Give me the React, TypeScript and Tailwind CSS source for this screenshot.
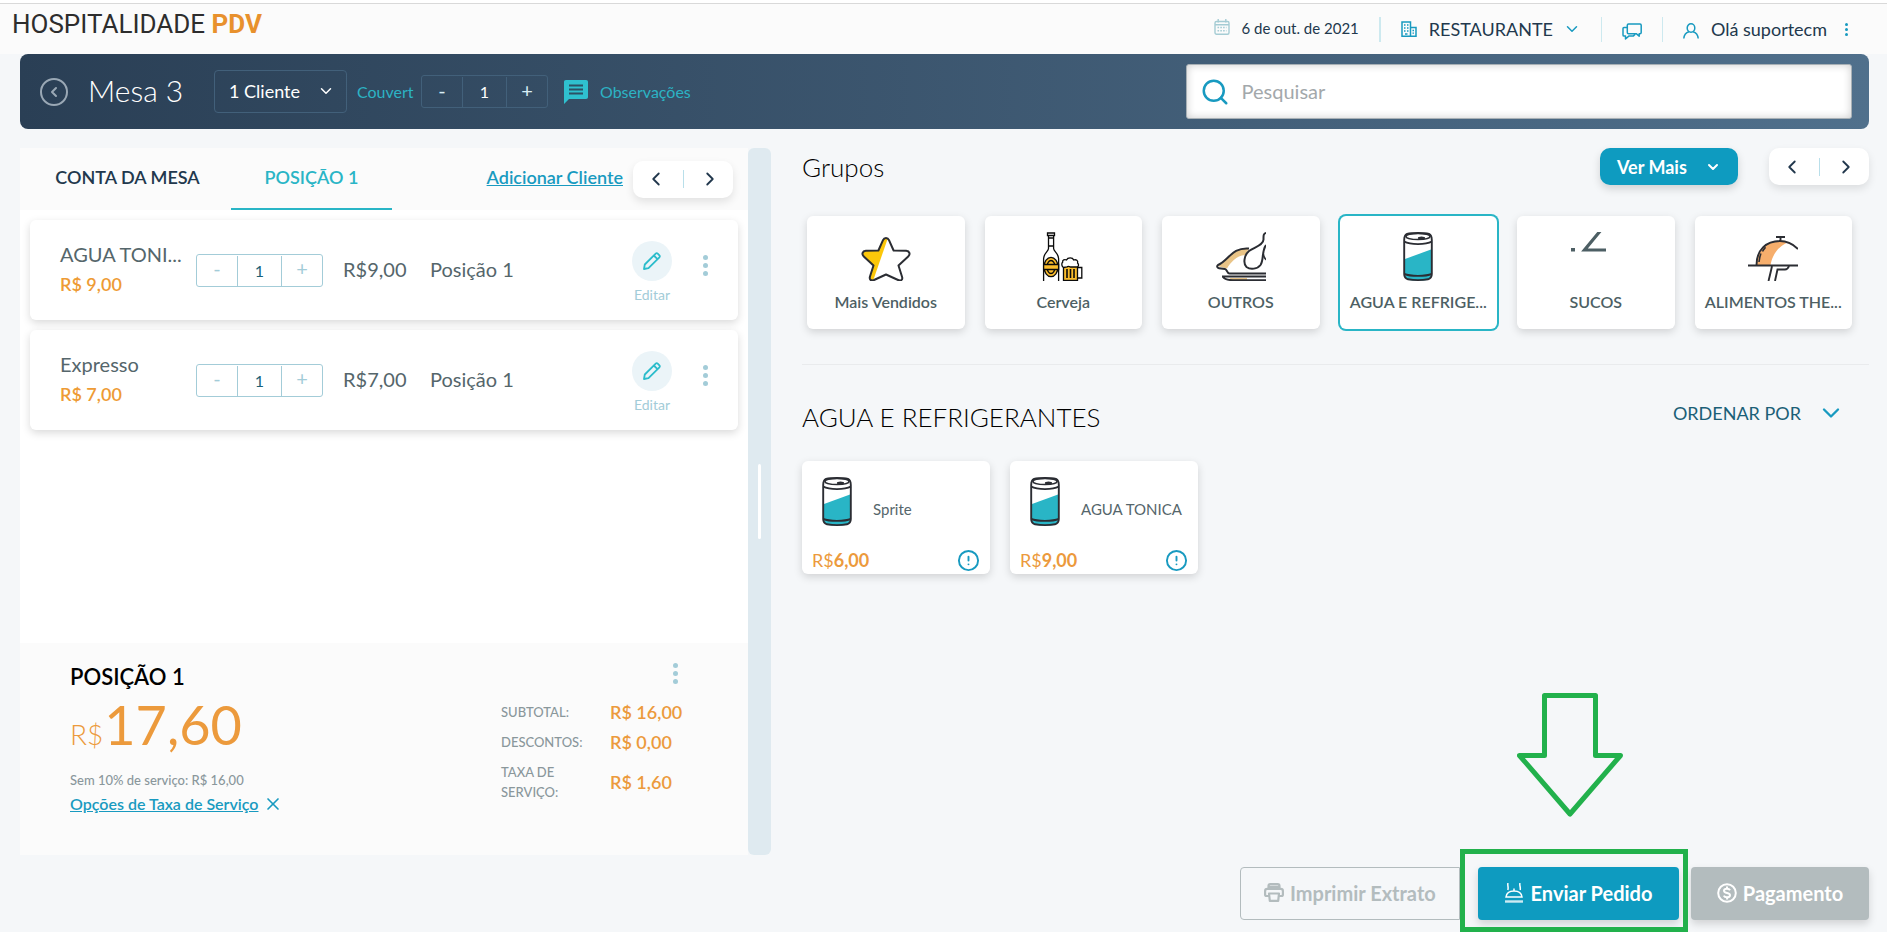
import { useState, type ReactNode } from 'react'
import clsx from 'clsx'
import { ChevronDown, ChevronLeft, ChevronRight, CircleAlert, Search, X } from 'lucide-react'

const items = [
  { id: 1, name: 'AGUA TONI...', unit: '9,00', position: 'Posição 1' },
  { id: 2, name: 'Expresso', unit: '7,00', position: 'Posição 1' },
]

const products = [
  { id: 1, name: 'Sprite', price: '6,00' },
  { id: 2, name: 'AGUA TONICA', price: '9,00' },
]

const totals = [
  { label: 'SUBTOTAL:', value: 'R$ 16,00' },
  { label: 'DESCONTOS:', value: 'R$ 0,00' },
  { label: 'TAXA DE SERVIÇO:', value: 'R$ 1,60' },
]

/* ---------- Icons ---------- */

function StarIcon() {
  const star =
    'M25 6c1.400 0 2.400.8 3 2.200l4.600 10.300 12.600.3c3.400.2 4.400 3.400 2 5.600L37.500 33.500l3.600 11.500c.8 2.800-1.200 4.200-4 3L25 42.500l-12 5.500c-3 1.200-4.800-.4-4.100-3.200L12.500 33.500 2.800 24.400c-2.400-2.200-1.400-5.400 2-5.600l12.600-.3L22 8.200c.6-1.400 1.600-2.200 3-2.200z'
  return (
    <svg viewBox="0 0 50 49" className="h-[49px] w-[50px]">
      <clipPath id="star-left">
        <path d="M0 0H29L12 49H0z" />
      </clipPath>
      <path d={star} fill="#fff" />
      <path d={star} fill="#fcc70a" clipPath="url(#star-left)" />
      <path d={star} fill="none" stroke="#2b2d33" strokeWidth="2" strokeLinejoin="round" />
    </svg>
  )
}

function BeerIcon() {
  return (
    <svg viewBox="0 0 50 49" className="h-[49px] w-[50px]" fill="none" stroke="#0b0b0b" strokeWidth="1.300">
      <path d="M9.500 1h7v2.500h-7zM10.500 3.500v13c0 3-4.900 5-4.900 10V49M15.600 3.500v13c0 3 5 5 5 10V49M10.500 6h5M10.500 14h5" />
      <ellipse cx="13" cy="35" rx="7" ry="9.600" fill="#fbbd2c" />
      <ellipse cx="13" cy="35" rx="4" ry="6.500" fill="#fbbd2c" />
      <path d="M5.600 32.500h15v5h-15z" fill="#fbbd2c" />
      <path d="M25.500 34h14V49h-14z" fill="#fbbd2c" />
      <path d="M29 37v9M32.500 37v9M36 37v9" strokeWidth="1.600" />
      <path d="M26 48.500h13.500" strokeWidth="1.400" />
      <path d="M40 35.500h3.800v10.500H40" />
      <path
        d="M25.500 35.500c-2-1.200-2.200-4-.8-5.500-.6-2 2-2.800 3.800-2 1.200-2.700 6.200-2.700 7.200 0 2.500-.8 4.600.7 3.900 3 1.600 1.500 1.100 4-1.100 4h-6c-1.200 0-2.200-1.500-3.500 0z"
        fill="#fff"
      />
    </svg>
  )
}

function ChickenIcon() {
  return (
    <svg viewBox="0 0 50 49" className="h-[49px] w-[50px]" strokeLinejoin="round">
      <path d="M1.500 34C9 32 13 16.500 33 16.500L29 23c-9 1-14 7-18 13.500z" fill="#e9c487" />
      <path d="M33 16.500C16 15 12 29 2 33c-1.500 1.300-.8 3 1 3.200l6 .8c2.500.5 1.500 4.500 4.500 4.500H50" fill="none" stroke="#2b2d33" strokeWidth="2" />
      <path
        d="M51 1c-4 0-3.500 3-3.500 6.500C47.500 13 39 15 33 19c-5 4-6 13-2.500 16 4 3 11 2 14-2 3.500-5 1-14 5.500-20"
        fill="#fff"
        stroke="#2b2d33"
        strokeWidth="2"
      />
      <path d="M47.500 22c0 3 1 4.500 3 6" fill="none" stroke="#2b2d33" strokeWidth="1.500" />
      <path d="M13 46h18v2H16z" fill="#e9c487" />
      <path d="M6 44.500h44M7 45c2 3 6 3.200 10 3.200h33" fill="none" stroke="#2b2d33" strokeWidth="1.900" />
    </svg>
  )
}

function CanIcon() {
  return (
    <svg viewBox="0 0 30 49" className="h-[49px] w-[30px]">
      <path d="M2 27L28 17.500V43c0 3-1 4.500-4 5-5 .8-13 .8-18 0-3-.5-4-2-4-5z" fill="#29b5c6" />
      <g fill="none" stroke="#2b2d33" strokeWidth="1.900">
        <path d="M1.200 8C1.200 6 2 2.800 4 2 9 .6 21 .6 26 2c2 .8 2.800 4 2.800 6v34c0 3-1 4.500-3.800 5.300-5 1-15 1-20 0-2.800-.8-3.800-2.300-3.800-5.300z" />
        <ellipse cx="15" cy="4.500" rx="12" ry="3" strokeWidth="1.500" />
        <path d="M1.200 9.500c6 3.500 21.600 3.500 27.600 0M1.200 42c6 2.500 21.600 2.500 27.600 0" />
      </g>
      <ellipse cx="18.500" cy="6" rx="3.600" ry="1.500" fill="#2b2d33" />
    </svg>
  )
}

function AngleIcon() {
  return (
    <svg viewBox="0 0 50 49" className="h-[49px] w-[50px]">
      <path d="M0 16h4v3.500H0z" fill="#4d5f64" />
      <path d="M30-2L13.500 18H35" fill="none" stroke="#4d5f64" strokeWidth="3.200" />
    </svg>
  )
}

function ClocheIcon() {
  return (
    <svg viewBox="0 0 50 49" className="h-[49px] w-[50px]">
      <path d="M8.500 33c0-13 9-24 24-24 2 0 4 .5 6 2-8 4-14 11-16 22z" fill="#f6ae6c" />
      <g fill="none" stroke="#2b2d33" strokeWidth="1.900">
        <path d="M8.500 33C8.500 18 18 9 32 9c7 0 13 3 18 8M28 5h9M32.500 5v4M0 33.500h50" />
        <path d="M11 30c.3-3 .8-6 2-8.500M14.500 19.500c1-2 2-3 3-4.200" strokeWidth="1.600" />
        <path d="M24 34c-1 5-2.500 11-3.500 15M41 34c-1 3-2.500 3.500-4 3.500h-7.500L27 49" />
      </g>
    </svg>
  )
}

function CalendarIcon() {
  return (
    <svg viewBox="0 0 16 16" className="h-4 w-4" fill="none" stroke="#a5ccd4" strokeWidth="1.400">
      <rect x="1" y="2.500" width="14" height="12.800" rx="1.500" />
      <path d="M1 5.800h14M4.200 0v3.500M11.800 0v3.500" />
      <path d="M3.500 8.500h9M3.500 11.800h9" strokeDasharray="1.600 1.200" />
    </svg>
  )
}

function BuildingIcon() {
  return (
    <svg viewBox="0 0 16 16" className="h-4 w-4" fill="none" stroke="#189ac0" strokeWidth="1.500">
      <path d="M1 15.200V1h8.500v14.200zM9.500 6.500H15v8.700H9.500" />
      <path d="M3 4h1.500M6 4h1.500M3 7h1.500M6 7h1.500M3 10h1.500M6 10h1.500M4 13h2.500M11.500 9.500H13M11.500 12.200H13" strokeWidth="1.300" />
    </svg>
  )
}

function ChatIcon() {
  return (
    <svg viewBox="0 0 20 17" className="h-[17px] w-5" fill="none" stroke="#189ac0" strokeWidth="1.500" strokeLinejoin="round">
      <path d="M6.500 1H18c.8 0 1.200.4 1.200 1.200v7.300c0 .8-.4 1.200-1.200 1.200h-.8v2.500l-3-2.500H6.500c-.8 0-1.200-.4-1.200-1.200V2.200C5.300 1.400 5.700 1 6.500 1z" />
      <path d="M5.300 4.500H2C1.300 4.500 1 4.900 1 5.600V12c0 .7.300 1.100 1 1.100h1.500V16l3.300-2.900h4.400l2-2" />
    </svg>
  )
}

function UserIcon() {
  return (
    <svg viewBox="0 0 16 16" className="h-4 w-4" fill="none" stroke="#189ac0" strokeWidth="1.500">
      <ellipse cx="8" cy="5" rx="3.800" ry="4.200" />
      <path d="M.8 15.500C1.200 11.500 3.500 9.500 6 8.800M15.200 15.500c-.4-4-2.700-6-5.200-6.700" />
    </svg>
  )
}

function NoteIcon() {
  return (
    <svg viewBox="0 0 24 24" className="h-6 w-6">
      <path d="M2 0h20c1.300 0 2 .8 2 2v15c0 1.300-.7 2-2 2H5l-5 5V2C0 .8.700 0 2 0z" fill="#2fc0cf" />
      <path d="M5 5.500h14M5 9.500h14M5 13.500h14" stroke="#2d5065" strokeWidth="2" />
    </svg>
  )
}

function PencilIcon() {
  return (
    <svg viewBox="0 0 18 18" className="h-[18px] w-[18px]" fill="none" stroke="#2bbccb" strokeWidth="1.800" strokeLinejoin="round">
      <path d="M1 17l.8-4.500L12.700 1.600c.6-.6 1.400-.6 2 0l1.700 1.700c.6.6.6 1.400 0 2L5.500 16.200zM10.800 3.500l3.700 3.700" />
    </svg>
  )
}

function PrinterIcon() {
  return (
    <svg viewBox="0 0 20 19" className="h-[19px] w-5" fill="none" stroke="#b3bcbe" strokeWidth="2.200" strokeLinejoin="round">
      <path d="M4.500 6V3c0-1.200.6-1.800 1.800-1.800h7.400c1.200 0 1.800.6 1.800 1.800v3M4.500 13H2.600c-.9 0-1.500-.6-1.500-1.500V8c0-1.400.8-2.200 2.200-2.200h13.400c1.400 0 2.200.8 2.200 2.200v3.500c0 .9-.6 1.500-1.500 1.500h-1.900M5 10.500h10l-.8 7.400H5.800zM4.500 3.800h11" />
    </svg>
  )
}

function OrderIcon() {
  return (
    <svg viewBox="0 0 18 20" className="h-5 w-[18px]" fill="none" stroke="#fff" strokeWidth="1.500">
      <path d="M1 14c.5-4 4-6 8-6s7.500 2 8 6zM9 8V5.500M3 0c-.8 2.300.8 4-.2 7M15 0c-.8 2.300.8 4 .2 7" />
      <path d="M0 18.500h18" strokeWidth="2.400" stroke="#cdeaf2" />
    </svg>
  )
}

function MoneyIcon() {
  return (
    <svg viewBox="0 0 20 20" className="h-5 w-5" fill="none" stroke="#fff" strokeWidth="2">
      <circle cx="10" cy="10" r="8.800" />
      <path d="M13 7.200c-.5-1-1.500-1.500-3-1.500-1.800 0-3 .8-3 2.100C7 11 13 9 13 12.200c0 1.300-1.200 2.100-3 2.100-1.600 0-2.700-.6-3.200-1.700M10 3.500v2.200M10 14.300v2.200" />
    </svg>
  )
}

function Dots({ label, small }: { label: string; small?: boolean }) {
  return (
    <button
      aria-label={label}
      className={clsx('flex flex-col items-center', small ? 'gap-[2px] text-[#189ac0]' : 'gap-[3px] text-[#a3ccd8]')}
    >
      {[0, 1, 2].map(i => (
        <span key={i} className={clsx('rounded-full bg-current', small ? 'size-[3px]' : 'size-[5px]')} />
      ))}
    </button>
  )
}

/* ---------- Pieces ---------- */

function Pager({ label }: { label: string }) {
  return (
    <div
      role="group"
      aria-label={label}
      className="flex h-[37px] w-[100px] items-center justify-between rounded-[10px] bg-white px-3 text-[#22384d] shadow-[0_4px_8px_rgba(0,0,0,0.1)]"
    >
      <button aria-label="Anterior"><ChevronLeft size={22} /></button>
      <span className="h-[18px] w-px bg-[#b9dfea]" />
      <button aria-label="Próximo"><ChevronRight size={22} /></button>
    </div>
  )
}

function Stepper({ dark, label }: { dark?: boolean; label: string }) {
  const [qty, setQty] = useState(1)
  return (
    <div
      role="group"
      aria-label={label}
      className={clsx(
        'flex h-[33px] w-[127px] shrink-0 items-stretch rounded-[3px] border text-xl leading-6',
        dark ? 'border-[#42607a] text-[#d9eef5]' : 'border-[#a3ccd8] text-[#a3ccd8]',
      )}
    >
      <button aria-label="Diminuir" className="flex-1 pb-1" onClick={() => setQty(Math.max(1, qty - 1))}>-</button>
      <output
        className={clsx(
          'mt-px flex w-[45px] items-center justify-center border-x text-base',
          dark ? 'border-[#42607a] text-white' : 'border-[#a3ccd8] text-[#1b6077]',
        )}
      >
        {qty}
      </output>
      <button aria-label="Aumentar" className="flex-1 pb-1" onClick={() => setQty(qty + 1)}>+</button>
    </div>
  )
}

function OrderItem({ name, unit, position }: { name: string; unit: string; position: string }) {
  return (
    <li className="flex h-[100px] items-center rounded-md bg-white px-[30px] shadow-[0_3px_8px_rgba(0,0,0,0.15)]">
      <div className="w-[136px] shrink-0 pb-[2px]">
        <p className="text-xl leading-[30px] whitespace-nowrap text-[#55666b]">{name}</p>
        <p className="text-lg leading-[30px] font-semibold text-[#ee9b35]">R$ {unit}</p>
      </div>
      <Stepper label={`Quantidade de ${name}`} />
      <span className="ml-5 w-[67px] pb-[2px] text-xl whitespace-nowrap text-[#55666b]">R${unit}</span>
      <span className="ml-5 flex-1 pb-[2px] text-xl whitespace-nowrap text-[#55666b]">{position}</span>
      <button className="mr-[31px] flex flex-col items-center pt-[6px] text-sm text-[#a3ccd8]">
        <span className="mb-1 flex size-10 items-center justify-center rounded-full bg-[#ebf4f8]">
          <PencilIcon />
        </span>
        Editar
      </button>
      <div className="pb-[10px]">
        <Dots label={`Mais opções de ${name}`} />
      </div>
    </li>
  )
}

interface Group {
  label: string
  title: string
  icon: ReactNode
}

const groups: Group[] = [
  { label: 'Mais Vendidos', title: 'MAIS VENDIDOS', icon: <StarIcon /> },
  { label: 'Cerveja', title: 'CERVEJA', icon: <BeerIcon /> },
  { label: 'OUTROS', title: 'OUTROS', icon: <ChickenIcon /> },
  { label: 'AGUA E REFRIGE...', title: 'AGUA E REFRIGERANTES', icon: <CanIcon /> },
  { label: 'SUCOS', title: 'SUCOS', icon: <AngleIcon /> },
  { label: 'ALIMENTOS THE...', title: 'ALIMENTOS', icon: <ClocheIcon /> },
]

function GroupCard({ label, icon, active, onClick }: { label: string; icon: ReactNode; active: boolean; onClick: () => void }) {
  return (
    <button
      onClick={onClick}
      className={clsx(
        'flex h-[113px] min-w-0 flex-col items-center rounded-md bg-white pt-4',
        active ? 'ring-2 ring-[#29b5c6]' : 'shadow-[0_3px_8px_rgba(0,0,0,0.15)]',
      )}
    >
      {icon}
      <span className="mt-[9px] text-base font-semibold whitespace-nowrap text-[#4d5f64]">{label}</span>
    </button>
  )
}

function Header() {
  return (
    <header className="flex h-[54px] items-start justify-between bg-[#fbfbfb] pr-[39px] pl-3">
      <h1 className="pt-2 font-['Roboto',sans-serif] text-[26px] leading-8 text-[#2d2d2d]">
        HOSPITALIDADE <b className="text-[#e8912d]">PDV</b>
      </h1>
      <div className="flex h-[54px] items-center pt-1 text-lg text-[#22384d]">
        <span className="pb-1"><CalendarIcon /></span>
        <span className="ml-3 text-[15px]">6 de out. de 2021</span>
        <span className="mx-5 h-[25px] w-[2px] bg-[#cde9ef]" />
        <button className="flex items-center">
          <BuildingIcon />
          <span className="ml-3">RESTAURANTE</span>
          <ChevronDown size={18} className="ml-[10px] text-[#189ac0]" />
        </button>
        <span className="mx-5 h-[25px] w-px bg-[#cde9ef]" />
        <button aria-label="Mensagens" className="pt-1"><ChatIcon /></button>
        <span className="mx-5 h-[25px] w-px bg-[#cde9ef]" />
        <span className="pt-1"><UserIcon /></span>
        <span className="mr-[18px] ml-3">Olá suportecm</span>
        <Dots small label="Menu do usuário" />
      </div>
    </header>
  )
}

function TableBar() {
  return (
    <div className="mr-[18px] ml-5 flex h-[75px] items-center rounded-lg bg-linear-to-r from-[#2a3f55] to-[#50708c] pr-[17px] pl-5">
      <button aria-label="Voltar" className="flex size-7 items-center justify-center rounded-full border-2 border-[#9aa8b5] text-[#9aa8b5]">
        <ChevronLeft size={16} strokeWidth={3} />
      </button>
      <h2 className="ml-5 w-[106px] pb-[2px] text-[30px] font-light whitespace-nowrap text-white">Mesa 3</h2>
      <div className="relative ml-5">
        <select
          aria-label="Clientes"
          className="h-[43px] w-[133px] appearance-none rounded-[4px] border border-[#42607a] bg-transparent pb-[2px] pl-[14px] text-lg text-white"
        >
          <option>1 Cliente</option>
        </select>
        <ChevronDown size={18} className="pointer-events-none absolute top-3 right-3 text-white" />
      </div>
      <span className="mr-2 ml-[10px] w-14 text-base text-[#2cb3c4]">Couvert</span>
      <Stepper dark label="Couvert" />
      <button className="ml-4 flex items-center gap-3 text-base text-[#2cb3c4]">
        <NoteIcon />
        Observações
      </button>
      <label className="ml-auto flex h-[55px] w-[calc(37%-4px)] items-center rounded-[3px] border border-[#a8b0b5] bg-white px-[13px] shadow-[inset_0_0_8px_rgba(0,0,0,0.2)]">
        <Search size={30} className="text-[#189ac0]" />
        <input
          aria-label="Pesquisar"
          placeholder="Pesquisar"
          className="ml-3 min-w-0 flex-1 bg-transparent pb-[2px] text-xl outline-none placeholder:text-[#a3a8ab]"
        />
      </label>
    </div>
  )
}

function Account() {
  return (
    <section className="flex">
      <div className="flex min-w-0 flex-1 flex-col bg-white">
        <div className="flex h-[62px] items-stretch bg-[#fbfbfb] pr-[15px] text-lg font-semibold">
          <button className="w-[211px] pb-1 pl-1 text-[#22384d]">CONTA DA MESA</button>
          <button className="w-[161px] border-b-2 border-[#29b5c6] pb-[2px] text-[#29b5c6]">POSIÇÃO 1</button>
          <div className="ml-auto flex items-center gap-[10px]">
            <a href="#adicionar" className="pb-1 text-[#189ac0] underline">Adicionar Cliente</a>
            <Pager label="Navegar posições" />
          </div>
        </div>

        <ul className="flex flex-1 flex-col gap-[10px] px-[10px] pt-[10px]">
          {items.map(i => (
            <OrderItem key={i.id} {...i} />
          ))}
        </ul>

        {/* Totals */}
        <div className="flex h-[212px] justify-between bg-[#fbfbfb] pt-5 pr-16 pl-[50px]">
          <div>
            <h3 className="text-[22px] leading-7 font-semibold text-black">POSIÇÃO 1</h3>
            <p className="mt-1 text-[54px] leading-[60px] text-[#ec9a3c]">
              <span className="mr-px text-[28px] font-light">R$</span>17,60
            </p>
            <p className="mt-[6px] text-[13px] leading-5 font-medium text-[#8a979b]">Sem 10% de serviço: R$ 16,00</p>
            <p className="flex items-center gap-1 text-base leading-7 font-semibold text-[#189ac0]">
              <a href="#taxa" className="underline">Opções de Taxa de Serviço</a>
              <button aria-label="Remover taxa"><X size={20} /></button>
            </p>
          </div>
          <div className="w-[183px]">
            <div className="flex h-[34px] justify-end pr-[6px]">
              <Dots label="Mais opções da posição" />
            </div>
            <dl>
              {totals.map(t => (
                <div key={t.label} className="flex items-center py-[5px]">
                  <dt className="w-[109px] pr-5 text-[13px] leading-5 font-medium text-[#8a979b]">{t.label}</dt>
                  <dd className="text-lg leading-5 font-semibold whitespace-nowrap text-[#ec9a3c]">{t.value}</dd>
                </div>
              ))}
            </dl>
          </div>
        </div>
      </div>
      <div role="separator" aria-orientation="vertical" className="flex w-[23px] items-center justify-center rounded-md bg-[#dfeaf0]">
        <span className="h-[75px] w-[3px] rounded-full bg-white" />
      </div>
    </section>
  )
}

function Catalog() {
  const [active, setActive] = useState('AGUA E REFRIGERANTES')
  return (
    <section className="min-w-0">
      <div className="flex items-start">
        <h2 className="pt-[3px] text-[26px] leading-8 font-light text-black">Grupos</h2>
        <button className="ml-auto flex h-[37px] w-[138px] items-center justify-between rounded-[10px] bg-[#0e9bc0] px-[17px] text-lg font-bold text-white shadow-[0_4px_8px_rgba(0,0,0,0.15)]">
          Ver Mais
          <ChevronDown size={16} strokeWidth={3} />
        </button>
        <div className="ml-[31px]">
          <Pager label="Navegar grupos" />
        </div>
      </div>

      <div className="mt-[31px] grid grid-cols-6 gap-5 border-b border-[#e9ebed] pr-[17px] pb-[35px] pl-[5px]">
        {groups.map(g => (
          <GroupCard key={g.title} label={g.label} icon={g.icon} active={g.title === active} onClick={() => setActive(g.title)} />
        ))}
      </div>

      <div className="mt-[34px] flex items-center justify-between pr-6">
        <h2 className="text-[26px] leading-9 font-light text-black">{active}</h2>
        <button className="flex items-center gap-4 pb-2 text-lg text-[#1b6077]">
          ORDENAR POR
          <ChevronDown size={28} className="text-[#189ac0]" />
        </button>
      </div>

      <div className="mt-[26px] flex gap-5">
        {products.map(p => (
          <article key={p.id} className="flex h-[113px] w-[188px] flex-col rounded-md bg-white pt-4 shadow-[0_3px_8px_rgba(0,0,0,0.15)]">
            <div className="flex pl-5">
              <CanIcon />
              <h3 className="mt-[21px] ml-[21px] text-[15px] whitespace-nowrap text-[#55666b]">{p.name}</h3>
            </div>
            <div className="mt-auto flex items-center justify-between px-[10px]">
              <span className="text-lg text-[#ec9a3c]">R$<b>{p.price}</b></span>
              <button aria-label={`Detalhes de ${p.name}`}><CircleAlert size={23} className="text-[#189ac0]" /></button>
            </div>
          </article>
        ))}
      </div>
    </section>
  )
}

function Actions() {
  return (
    <footer className="flex h-[77px] justify-end pt-3 pr-[18px] text-xl font-bold">
      <button className="flex h-[53px] w-[220px] items-center gap-[6px] rounded-l-[4px] border border-[#b3bcbe] pb-[2px] pl-[23px] text-[#b3bcbe]">
        <PrinterIcon />
        Imprimir Extrato
      </button>
      <div className="relative ml-[18px]">
        <button className="flex h-[53px] w-[201px] items-center justify-center gap-2 rounded-[4px] bg-[#0e9bc0] pb-[2px] text-white shadow-[0_4px_8px_rgba(0,0,0,0.15)]">
          <OrderIcon />
          Enviar Pedido
        </button>
        {/* Highlight frame and arrow over the send button */}
        <div className="pointer-events-none absolute -top-[18px] -left-[18px] h-[83px] w-[228px] border-5 border-[#22b14c]" />
        <svg
          viewBox="0 0 106 126"
          className="pointer-events-none absolute -top-[175px] left-[39px] h-[126px] w-[106px]"
          fill="none"
          stroke="#22b14c"
          strokeWidth="5"
        >
          <path d="M27.500 3.500h51v60h25L53 122 2.500 63.500h25z" strokeLinejoin="round" />
        </svg>
      </div>
      <button className="ml-3 flex h-[53px] w-[178px] items-center justify-center gap-[6px] rounded-[4px] bg-[#b3bcbe] pb-[2px] text-white shadow-[0_4px_8px_rgba(0,0,0,0.15)]">
        <MoneyIcon />
        Pagamento
      </button>
    </footer>
  )
}

export default function App() {
  return (
    <div className="relative flex min-h-screen flex-col overflow-hidden bg-[#f5f7f9] font-['Lato',sans-serif]">
      <div className="absolute inset-x-0 top-0 h-1 border-b border-[#d9d9d9] bg-white" />
      <Header />
      <TableBar />
      <main className="mt-[19px] grid flex-1 grid-cols-[751fr_1067fr] gap-[31px] pr-[18px] pl-5">
        <Account />
        <Catalog />
      </main>
      <Actions />
    </div>
  )
}
